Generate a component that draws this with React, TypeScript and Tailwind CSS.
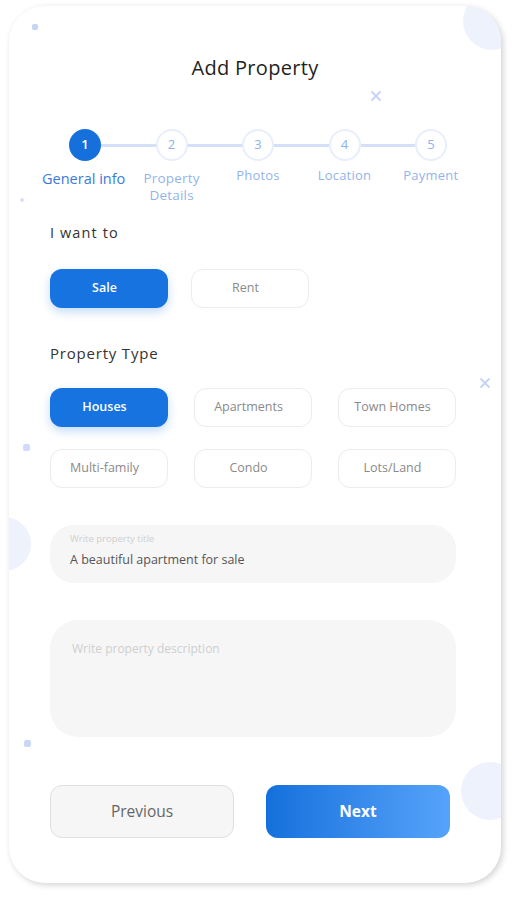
import React from "react";

const steps = [
  { n: "1", label: ["General info"] },
  { n: "2", label: ["Property", "Details"] },
  { n: "3", label: ["Photos"] },
  { n: "4", label: ["Location"] },
  { n: "5", label: ["Payment"] },
];

const types = ["Houses", "Apartments", "Town Homes", "Multi-family", "Condo", "Lots/Land"];

const Cross = ({ className }: { className: string }) => (
  <svg className={className} width="12" height="12" viewBox="0 0 12 12" fill="none">
    <path d="M2 2 L10 10 M10 2 L2 10" stroke="#c3d3f5" strokeWidth="1.8" strokeLinecap="round" />
  </svg>
);

const Chip = ({ label, active }: { label: string; active?: boolean }) => (
  <button
    className={
      active
        ? "h-[39px] w-[118px] rounded-[12px] bg-[#1673e0] pr-[9px] text-[12.5px] font-semibold text-white shadow-[0_4px_10px_rgba(22,115,224,0.25)]"
        : "h-[39px] w-[118px] rounded-[12px] border border-[#ececec] bg-white pr-[9px] text-[12.5px] text-[#8a8a8a]"
    }
  >
    {label}
  </button>
);

export default function App() {
  return (
    <div className="h-[900px] w-[519px] bg-white pl-[9px] pt-[6px]" style={{ fontFamily: "'Open Sans', sans-serif" }}>
      <div className="relative h-[877px] w-[492px] overflow-hidden rounded-[36px] bg-white px-[41px] shadow-[2px_2px_6px_rgba(0,0,0,0.18)]">
        {/* decorations */}
        <div className="absolute right-[-20px] top-[-14px] h-[58px] w-[58px] rounded-full bg-[#eef2fd]" />
        <div className="absolute left-[-32px] top-[511px] h-[54px] w-[54px] rounded-full bg-[#eef2fd]" />
        <div className="absolute right-[-18px] top-[756px] h-[58px] w-[58px] rounded-full bg-[#eef2fd]" />
        <div className="absolute left-[23px] top-[18px] h-[6px] w-[6px] rounded-[2px] bg-[#c6d5f6]" />
        <div className="absolute left-[11px] top-[192px] h-[4px] w-[4px] rounded-full bg-[#d6e0f7]" />
        <div className="absolute left-[14px] top-[438px] h-[7px] w-[7px] rounded-[2px] bg-[#cfdbf7]" />
        <div className="absolute left-[15px] top-[734px] h-[7px] w-[7px] rounded-[2px] bg-[#c9d7f7]" />
        <Cross className="absolute left-[361px] top-[84px]" />
        <Cross className="absolute left-[470px] top-[371px]" />

        <div className="relative flex flex-col">
          <h1 className="mt-[50px] text-center text-[20px] font-medium leading-[24px] tracking-[0.3px] text-[#1f1f1f]">
            Add Property
          </h1>

          {/* stepper */}
          <div className="ml-[-8px] mt-[49px] w-[432px]">
            <div className="flex items-center px-[27px]">
              {steps.map((s, i) => (
                <React.Fragment key={s.n}>
                  {i > 0 && <div className="h-[3px] flex-1 bg-[#d3e0f8]" />}
                  <div
                    className={
                      i === 0
                        ? "flex h-[32px] w-[32px] items-center justify-center rounded-full bg-[#1570db] text-[13px] font-semibold text-white"
                        : "flex h-[32px] w-[32px] items-center justify-center rounded-full border-2 border-[#e8eefb] bg-white text-[13px] text-[#8db2ee]"
                    }
                  >
                    {s.n}
                  </div>
                </React.Fragment>
              ))}
            </div>
            <div className="mt-[8px] grid grid-cols-5">
              {steps.map((s, i) => (
                <div
                  key={s.n}
                  className={
                    i === 0
                      ? "mr-[14px] mt-[1px] whitespace-nowrap text-center text-[14.5px] leading-[17px] text-[#3b7bd8]"
                      : i === 1
                        ? "mt-[1px] whitespace-nowrap text-center text-[13.5px] leading-[17px] tracking-[0.2px] text-[#93b4ea]"
                        : "mt-[-2px] whitespace-nowrap text-center text-[13px] leading-[17px] tracking-[0.2px] text-[#93b4ea]"
                  }
                >
                  {s.label.map((l) => (
                    <div key={l}>{l}</div>
                  ))}
                </div>
              ))}
            </div>
          </div>

          <p className="mt-[19px] text-[14.5px] leading-[20px] tracking-[1.1px] text-[#333]">I want to</p>
          <div className="mt-[26px] flex gap-[23px]">
            <Chip label="Sale" active />
            <Chip label="Rent" />
          </div>

          <p className="mt-[35px] text-[15px] leading-[20px] tracking-[0.8px] text-[#333]">Property Type</p>
          <div className="mt-[25px] grid w-[406px] grid-cols-3 gap-x-[26px] gap-y-[22px]">
            {types.map((t, i) => (
              <Chip key={t} label={t} active={i === 0} />
            ))}
          </div>

          {/* title input */}
          <div className="mt-[37px] flex h-[58px] w-[406px] flex-col rounded-[24px] bg-[#f6f6f6] px-[20px] pt-[7px]">
            <span className="text-[9.5px] leading-[13px] text-[#cfcfcf]">Write property title</span>
            <span className="mt-[7px] text-[12.5px] leading-[16px] text-[#555]">A beautiful apartment for sale</span>
          </div>

          <div className="mt-[37px] h-[117px] w-[406px] rounded-[28px] bg-[#f6f6f6] px-[22px] pt-[15px]">
            <span className="text-[12px] leading-[16px] text-[#cfcfcf]">Write property description</span>
          </div>

          <div className="mt-[48px] flex gap-[32px]">
            <button className="h-[53px] w-[184px] rounded-[12px] border border-[#e0e0e0] bg-[#f6f6f6] text-[15.5px] font-medium text-[#666]">
              Previous
            </button>
            <button className="h-[53px] w-[184px] rounded-[12px] bg-gradient-to-r from-[#1270dc] to-[#55a3fa] text-[15.5px] font-bold text-white">
              Next
            </button>
          </div>
        </div>
      </div>
    </div>
  );
}
